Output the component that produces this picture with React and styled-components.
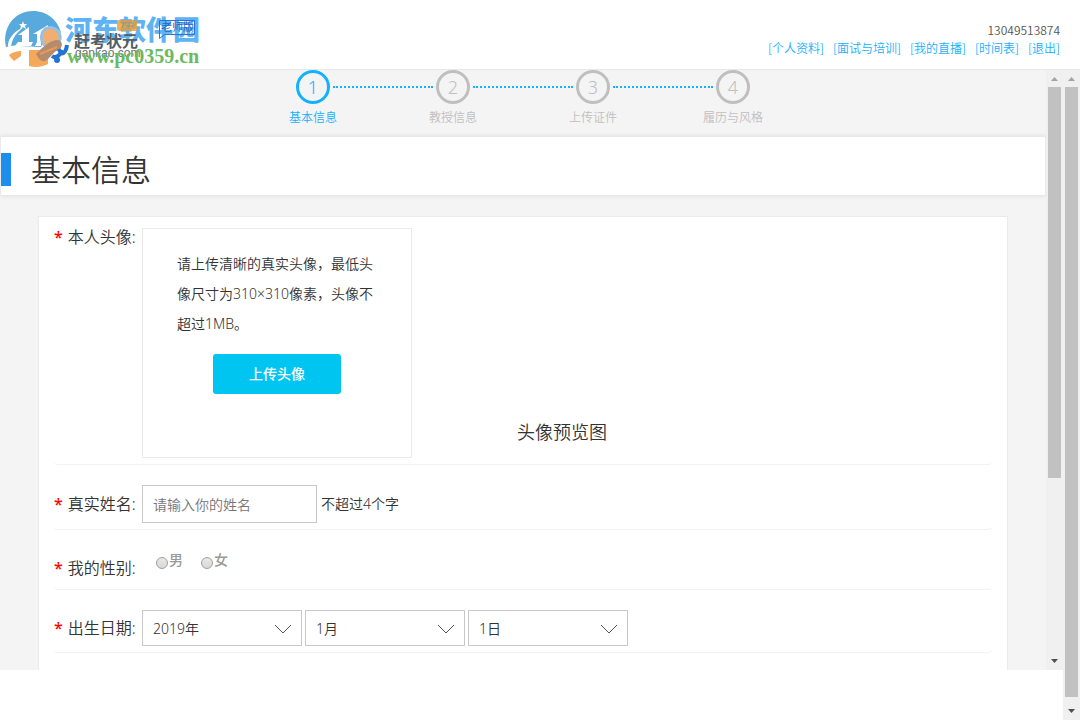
import React, { useState } from "react";
import styled, { createGlobalStyle, css } from "styled-components";

const STEPS = ["基本信息", "教授信息", "上传证件", "履历与风格"];
const LINKS = ["个人资料", "面试与培训", "我的直播", "时间表", "退出"];

const range = (from, to) => Array.from({ length: to - from + 1 }, (_, i) => from + i);

const Logo = () => (
    <LogoSvg viewBox="0 0 204 60" role="img" aria-label="赶考状元">
        <path d="M6 39C2 20 14 3 33 3c14 0 25 9 28 22-5-3-12-2-15 3-3 4-3 8-5 11L20 38c-3-1-9 0-14 1Z" fill="#58a9dc" />
        <path d="M9 47c4-3 8-4 12-4v5l-7 5c-2-2-4-4-5-6ZM29 42h12l7 4v10c-6 3-12 4-19 2Z" fill="#f5a85a" />
        <path d="M8 40c-1-9 6-17 16-21-7 5-12 11-13 20Z" fill="#fff" />
        <path d="M15 38l3-4h4v-7h-4l11-8v15h4l-2 4ZM35 38l2-4v-8h-4l15-9v12l-7 5v4Z" fill="#fff" />
        <path d="M23 13l1 3 3 0-2 2 1 3-3-2-3 2 1-3-2-2h3Z" fill="#fff" />
        <path d="M45 21c7-4 16 1 15 10-1 5-6 9-12 8-7-2-9-12-3-18Z" fill="#f2ad70" stroke="#9bbfe3" strokeWidth="3" />
        <path d="M36 46c7-7 14-14 22-14 5 1 5 7 1 10-6 1-9 9-14 11-4 1-6-2-9-7Z" fill="#b58b6e" />
        <path d="M40 46l17-7" stroke="#e89b55" strokeWidth="2" />
        <path d="M59 41c2 8 7 4 8-4M52 48c4 3 9-1 9-6" fill="none" stroke="#2374d2" strokeWidth="4" />
        <circle cx="57" cy="52" r="3" fill="#2374d2" />
        <Mark x="65" y="32" $size={27} $weight={900} $color="#5db3f3">河东软件园</Mark>
        <rect x="117" y="12" width="20" height="11" rx="2" fill="#ee9a2e" opacity="0.8" />
        <path d="M121 15h12M124 15l-2 5M129 15v5M126 18h7" stroke="#7d9b9b" fill="none" />
        <Mark x="74" y="39" $size={16} $weight={700} $color="#565c63">赶考状元</Mark>
        <Mark x="75" y="49" $size={12} $weight={400} $color="#6b7078" $latin>gankao.com</Mark>
        <Mark x="67" y="55" $size={20} $weight={700} $color="#6abb5f" $serif>www.pc0359.cn</Mark>
        <path d="M159.5 12.5h35v14h-30l-5 4Z" fill="none" stroke="#2f6fd8" />
        <Mark x="161" y="23" $size={11} $weight={400} $color="#2465c4">老师版</Mark>
    </LogoSvg>
);

const ScrollBar = ({ size }) => (
    <Bar aria-hidden="true">
        <Arrow viewBox="0 0 17 17"><path d="M5 11h7L8.5 7Z" fill="#a3a3a3" /></Arrow>
        <Track><Thumb $size={size} /></Track>
        <Arrow viewBox="0 0 17 17"><path d="M5 6h7L8.5 10Z" fill="#505050" /></Arrow>
    </Bar>
);

const DateSelect = ({ label, value, unit, options, onChange }) => (
    <SelectBox>
        <Select aria-label={label} value={value} onChange={(e) => onChange(Number(e.target.value))}>
            {options.map((n) => (
                <option key={n} value={n}>{n}{unit}</option>
            ))}
        </Select>
        <Chevron viewBox="0 0 16 10"><path d="M0 1l8 8 8-8" fill="none" stroke="#555" /></Chevron>
    </SelectBox>
);

const App = () => {
    const [name, setName] = useState("");
    const [year, setYear] = useState(2019);
    const [month, setMonth] = useState(1);
    const [day, setDay] = useState(1);

    return (
        <Page>
            <GlobalStyle />
            <Header>
                <Logo />
                <Account>
                    <span>13049513874</span>
                    <Nav>
                        {LINKS.map((text) => <a key={text} href="#">[{text}]</a>)}
                    </Nav>
                </Account>
            </Header>
            <Body>
                <Frame>
                    <Content>
                        <Steps>
                            {STEPS.map((text, i) => (
                                <Step key={text} $active={i === 0}>
                                    <StepNumber>{i + 1}</StepNumber>
                                    <span>{text}</span>
                                </Step>
                            ))}
                        </Steps>
                        <TitleBar>
                            <Title>基本信息</Title>
                        </TitleBar>
                        <Form>
                            <Row $space="11px 0 6px">
                                <Label as="div" $top>本人头像:</Label>
                                <UploadBox>
                                    <p>请上传清晰的真实头像，最低头像尺寸为310×310像素，头像不超过1MB。</p>
                                    <UploadButton type="button">上传头像</UploadButton>
                                </UploadBox>
                                <Preview>头像预览图</Preview>
                            </Row>
                            <Row $space="20px 0 6px">
                                <Label htmlFor="name">真实姓名:</Label>
                                <NameInput id="name" placeholder="请输入你的姓名" value={name} onChange={(e) => setName(e.target.value)} />
                                <Hint>不超过4个字</Hint>
                            </Row>
                            <Row $space="20px 0 3px">
                                <Label as="div" id="sex">我的性别:</Label>
                                <Radios role="radiogroup" aria-labelledby="sex">
                                    <RadioLabel><Radio type="radio" name="sex" />男</RadioLabel>
                                    <RadioLabel><Radio type="radio" name="sex" />女</RadioLabel>
                                </Radios>
                            </Row>
                            <Row $space="20px 0 6px">
                                <Label as="div">出生日期:</Label>
                                <Dates>
                                    <DateSelect label="年" unit="年" value={year} options={range(1950, 2019)} onChange={setYear} />
                                    <DateSelect label="月" unit="月" value={month} options={range(1, 12)} onChange={setMonth} />
                                    <DateSelect label="日" unit="日" value={day} options={range(1, 31)} onChange={setDay} />
                                </Dates>
                            </Row>
                        </Form>
                    </Content>
                    <ScrollBar size="69%" />
                </Frame>
                <ScrollBar size="99%" />
            </Body>
        </Page>
    );
};

export default App;

const GlobalStyle = createGlobalStyle`
  * {
    box-sizing: border-box;
  }
  body {
    margin: 0;
    background: #fff;
    color: #333;
    font-family: "Noto Sans", "Noto Sans CJK SC", sans-serif;
    font-size: 14px;
    font-weight: 350;
  }
  input, select, button {
    font: inherit;
    color: inherit;
  }
  p {
    margin: 0;
  }
`;
const Page = styled.div`
  display: flex;
  flex-direction: column;
  height: 100vh;
  overflow: hidden;
`;
const Header = styled.header`
  display: flex;
  justify-content: space-between;
  flex-shrink: 0;
  height: 70px;
  border-bottom: 1px solid #e8e8e8;
`;
const LogoSvg = styled.svg`
  width: 204px;
  height: 60px;
  margin-top: 8px;
`;
const Mark = styled.text`
  font-family: "Noto Sans CJK SC", sans-serif;
  font-size: ${(p) => p.$size}px;
  font-weight: ${(p) => p.$weight};
  fill: ${(p) => p.$color};
  ${(p) => p.$latin && css`font-family: "Liberation Sans", sans-serif;`}
  ${(p) => p.$serif && css`font-family: "Liberation Serif", serif;`}
`;
const Account = styled.div`
  display: flex;
  flex-direction: column;
  align-items: flex-end;
  padding: 21px 20px 0 0;
  color: #555;
  font-family: "Noto Sans CJK SC", sans-serif;
  font-size: 12px;
  line-height: 18px;
`;
const Nav = styled.nav`
  display: flex;
  gap: 9px;

  a {
    color: #14b1ff;
    text-decoration: none;
  }
`;
const Body = styled.div`
  display: flex;
  flex: 1;
  min-height: 0;
`;
const Frame = styled.div`
  display: flex;
  flex: 1;
  min-width: 0;
  margin-bottom: 50px;
  background: #f4f4f4;
`;
const Content = styled.main`
  flex: 1;
  min-width: 0;
  overflow: hidden;
`;
const Bar = styled.div`
  display: flex;
  flex-direction: column;
  flex-shrink: 0;
  width: 17px;
  background: #f0f0f0;
`;
const Arrow = styled.svg`
  width: 17px;
  height: 17px;
`;
const Track = styled.div`
  flex: 1;
  padding: 0 2px;
`;
const Thumb = styled.div`
  height: ${(p) => p.$size};
  background: #c1c1c1;
`;
const Steps = styled.ol`
  display: flex;
  justify-content: center;
  margin: 0;
  padding: 0 0 9px;
  list-style: none;
`;
const StepNumber = styled.b`
  display: flex;
  align-items: center;
  justify-content: center;
  width: 34px;
  height: 34px;
  border: 3px solid;
  border-radius: 50%;
  font-size: 18px;
  font-weight: 350;
`;
const Step = styled.li`
  position: relative;
  display: flex;
  flex-direction: column;
  align-items: center;
  gap: 5px;
  width: 140px;
  color: ${(p) => (p.$active ? "#14b1ff" : "#bfbfbf")};
  font-size: 12px;
  line-height: 18px;

  &:not(:first-child)::before {
    content: "";
    position: absolute;
    top: 16px;
    right: 90px;
    width: 100px;
    border-top: 2px dotted #14b1ff;
  }
`;
const TitleBar = styled.div`
  display: flex;
  align-items: center;
  height: 60px;
  padding-top: 7px;
  border: 1px solid #e9e9e9;
  background: #fff;
  box-shadow: 0 0 4px #ddd;
`;
const Title = styled.h1`
  margin: 0;
  padding-left: 20px;
  border-left: 10px solid #1b8eee;
  font-size: 30px;
  font-weight: 350;
  line-height: 33px;
`;
const Form = styled.form`
  margin: 20px 38px 0;
  padding: 0 15px 40px;
  border: 1px solid #ebebeb;
  background: #fff;
`;
const Row = styled.div`
  display: flex;
  align-items: center;
  padding: ${(p) => p.$space};
  border-bottom: 1px solid #f2f2f2;
  border-radius: 4px;
`;
const Label = styled.label`
  flex-shrink: 0;
  align-self: ${(p) => (p.$top ? "flex-start" : "center")};
  width: 88px;
  font-size: 16px;
  line-height: 18px;

  &::before {
    content: "*";
    margin-right: 5px;
    color: #f00;
    font-weight: 500;
  }
`;
const UploadBox = styled.div`
  width: 270px;
  height: 230px;
  padding: 20px 34px;
  border: 1px solid #ebebeb;
  line-height: 30px;
`;
const UploadButton = styled.button`
  display: block;
  width: 128px;
  height: 40px;
  margin: 15px auto 0;
  border: 0;
  border-radius: 3px;
  background: #00c5f1;
  color: #fff;
  font-weight: 500;
`;
const Preview = styled.div`
  align-self: flex-end;
  width: 300px;
  padding-bottom: 14px;
  font-size: 18px;
  text-align: center;
`;
const NameInput = styled.input`
  width: 175px;
  height: 38px;
  padding: 0 10px;
  border: 1px solid #c8c8c8;

  &::placeholder {
    color: #757575;
  }
`;
const Hint = styled.span`
  padding: 0 0 2px 4px;
`;
const Radios = styled.div`
  display: flex;
  gap: 18px;
  height: 36px;
  padding-left: 14px;
`;
const RadioLabel = styled.label`
  display: flex;
  height: 18px;
  align-items: center;
  color: #999;
  font-weight: 500;
`;
const Radio = styled.input`
  appearance: none;
  width: 12px;
  height: 12px;
  margin: 7px 1px 0 0;
  border: 1px solid #a0a0a0;
  border-radius: 50%;
  background: linear-gradient(#e8e8e8, #d8d8d8);

  &:checked {
    background: #666;
  }
`;
const Dates = styled.div`
  display: flex;
  gap: 3px;
`;
const SelectBox = styled.div`
  position: relative;
  width: 160px;
`;
const Select = styled.select`
  appearance: none;
  width: 100%;
  height: 36px;
  padding: 0 10px;
  border: 1px solid #c8c8c8;
  border-radius: 0;
  background: #fff;
`;
const Chevron = styled.svg`
  position: absolute;
  top: 14px;
  right: 11px;
  width: 16px;
  height: 10px;
  pointer-events: none;
`;
